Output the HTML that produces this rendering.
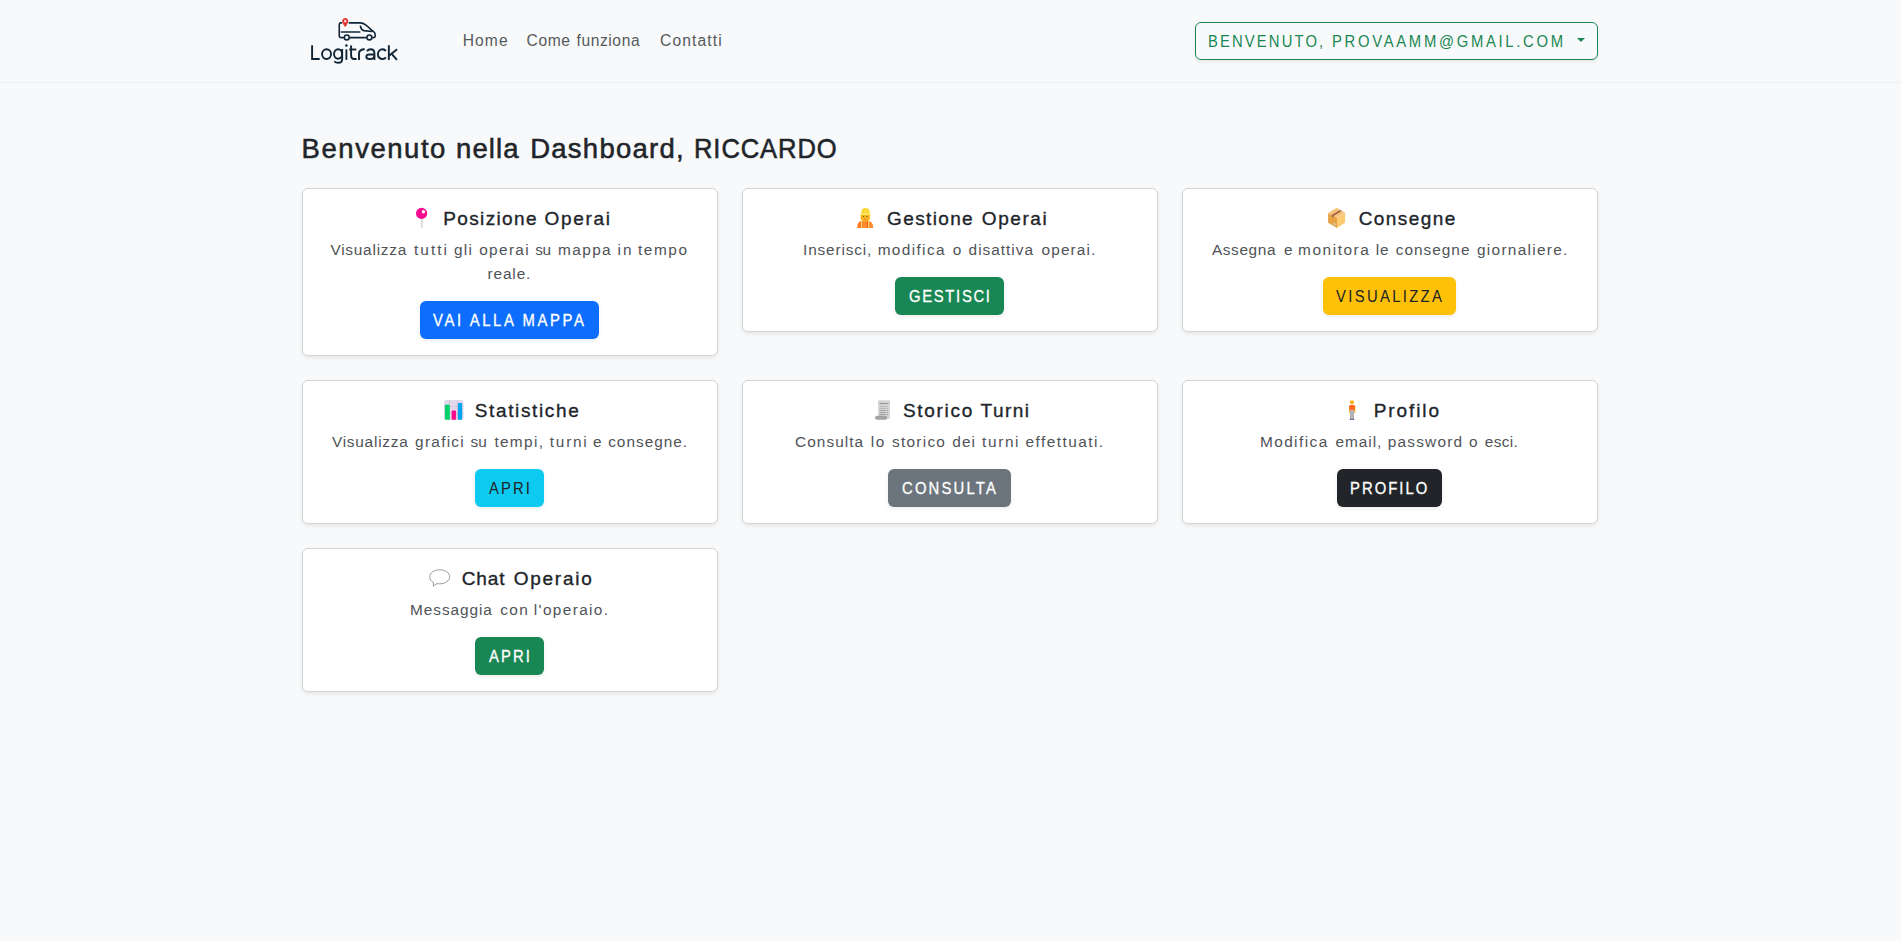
<!DOCTYPE html>
<html lang="it">
<head>
<meta charset="utf-8">
<title>Logitrack - Dashboard</title>
<style>
*{box-sizing:border-box;}
html,body{margin:0;padding:0;}
body{background:#f8f9fa;font-family:"Liberation Sans",sans-serif;color:#212529;width:1901px;height:941px;overflow:hidden;position:relative;}
a{text-decoration:none;}
.navbar{position:absolute;left:0;top:0;width:1901px;height:83px;border-bottom:1px solid #eceef0;background:#f8f9fa;}
.logo{position:absolute;left:300px;top:10px;}
.w{position:absolute;display:block;white-space:nowrap;line-height:1;font-weight:400;}
.dd{position:absolute;left:1195px;top:22px;width:403px;height:38px;margin:0;padding:0;background:transparent;border:1px solid #198754;border-radius:6px;box-shadow:0 2px 4px rgba(0,0,0,.075);font-family:inherit;}
.caret{position:absolute;left:381px;top:15px;width:0;height:0;border-top:4.8px solid #198754;border-left:4.8px solid transparent;border-right:4.8px solid transparent;}
h1{margin:0;}
.card{position:absolute;width:416px;background:#fff;border:1px solid #d3d4d5;border-radius:6px;box-shadow:0 2px 4px rgba(0,0,0,.075);}
.card-title,.card-text{margin:0;}
.emo{position:absolute;display:block;overflow:visible;}
.btn{position:absolute;display:block;height:38px;border-radius:6px;box-shadow:0 2px 4px rgba(0,0,0,.075);}
</style>
</head>
<body>
<nav class="navbar">
  <a class="brand" href="#" aria-label="Logitrack"><svg class="logo" width="110" height="60" viewBox="300 10 110 60"><g fill="none" stroke="#112739" stroke-width="1.6" stroke-linecap="round" stroke-linejoin="round">
  <path d="M341.5 22.9 H340.8 Q339.26 22.9 339.26 24.4 V36.1 Q339.26 37.6 340.8 37.6 H343.3"/>
  <path d="M349.4 22.9 H360.1 Q363 22.9 366 25.2 Q369 27.6 371.8 30.4 L373.3 31.3 Q375.2 32.6 375.2 35 V36.1 Q375.2 37.6 373.7 37.6 H372.6"/>
  <path d="M349.9 37.6 H366"/>
  <path d="M341.3 32 H359.8"/>
  <path d="M360.4 26.3 Q361.3 30.2 364 30.6 L371.8 31.5"/>
  <circle cx="346.75" cy="37.4" r="2.45"/>
  <circle cx="369.4" cy="37.4" r="2.45"/>
</g>
<path d="M345.2 18.1 C347 18.1 348.3 19.5 348.3 21.2 C348.3 23.3 345.2 27.1 345.2 27.1 C345.2 27.1 342.1 23.3 342.1 21.2 C342.1 19.5 343.4 18.1 345.2 18.1Z" fill="#e23b36"/>
<circle cx="345.2" cy="21.2" r="1.1" fill="#fff"/>
<g fill="none" stroke="#0f2536" stroke-width="1.9" stroke-linecap="butt" stroke-linejoin="miter">
  <path d="M312.1 45.2 V59.05 H319.7"/>
  <ellipse cx="326.55" cy="54.12" rx="4.5" ry="4.9"/>
  <ellipse cx="338.1" cy="53.95" rx="4.05" ry="4.75"/>
  <path d="M342.15 48.9 V59.5 C342.15 62 340.5 62.75 338.2 62.75 C336.6 62.75 335.2 62.2 334.3 61.3"/>
  <path d="M346.4 49.4 V59.9"/>
  <path d="M351.1 45.4 V55.8 Q351.1 59 354.2 59 H356.6"/>
  <path d="M349.2 49.5 H356.3"/>
  <path d="M359 59.9 V53.8 Q359 49.25 364.75 49.25"/>
  <path d="M366.9 51.1 Q368.4 49.2 370.6 49.2 Q374.4 49.2 374.4 53.2 V59.9"/>
  <path d="M374.4 54.5 H369.6 Q366.3 54.5 366.3 56.8 Q366.3 59.05 369.6 59.05 Q374.4 59.05 374.4 55.8"/>
  <path d="M385.9 51.0 A4.55 4.9 0 1 0 385.9 57.3"/>
  <path d="M388.85 45.2 V59.9"/>
  <path d="M397.1 49.3 L389.3 55.6"/>
  <path d="M391.7 53.9 L396.9 59.9"/>
</g>
<circle cx="346.4" cy="45.6" r="1.25" fill="#0f2536"/>
</svg></a>
  <a class="nav-link" href="#"><span class="w" style="left:462.7px;top:33px;font-size:15.6px;letter-spacing:1.1px;color:#55595c;">Home</span></a>
  <a class="nav-link" href="#"><span class="w" style="left:526.6px;top:33px;font-size:15.6px;letter-spacing:0.6px;color:#55595c;">Come</span><span class="w" style="left:576.5px;top:33px;font-size:15.6px;letter-spacing:0.586px;color:#55595c;">funziona</span></a>
  <a class="nav-link" href="#"><span class="w" style="left:660.0px;top:33px;font-size:15.6px;letter-spacing:1.143px;color:#55595c;">Contatti</span></a>
  <button class="dd" type="button"><span class="w" style="left:12.0px;top:11px;font-size:15.6px;letter-spacing:2.234px;color:#198754;transform:scaleX(0.95);transform-origin:0 0;">BENVENUTO,</span><span class="w" style="left:136.1px;top:11px;font-size:15.6px;letter-spacing:2.842px;color:#198754;transform:scaleX(0.95);transform-origin:0 0;">PROVAAMM@GMAIL.COM</span><span class="caret"></span></button>
</nav>

<main>
<h1><span class="w" style="left:301.6px;top:135px;font-size:27.5px;letter-spacing:1.537px;color:#212529;-webkit-text-stroke:0.55px #212529;">Benvenuto</span><span class="w" style="left:456.0px;top:135px;font-size:27.5px;letter-spacing:1.125px;color:#212529;-webkit-text-stroke:0.55px #212529;">nella</span><span class="w" style="left:530.2px;top:135px;font-size:27.5px;letter-spacing:1.256px;color:#212529;-webkit-text-stroke:0.55px #212529;">Dashboard,</span><span class="w" style="left:694.0px;top:135px;font-size:27.5px;letter-spacing:0.968px;color:#212529;-webkit-text-stroke:0.55px #212529;transform:scaleX(0.93);transform-origin:0 0;">RICCARDO</span></h1>
<div class="card" style="left:302px;top:188px;height:168px">
  <h5 class="card-title"><svg class="emo" style="left:110px;top:16px" width="17" height="25" viewBox="413 205 17 25" aria-hidden="true"><rect x="421" y="218" width="1.6" height="9.7" rx="0.6" fill="#d4d4d4"/>
<circle cx="421.6" cy="213.4" r="5.6" fill="#f70a8d"/>
<circle cx="423.4" cy="211.8" r="1.7" fill="#fff"/></svg><span class="w" style="left:140.3px;top:20px;font-size:19px;letter-spacing:1.35px;color:#212529;-webkit-text-stroke:0.35px #212529;">Posizione</span><span class="w" style="left:241.6px;top:20px;font-size:19px;letter-spacing:1.68px;color:#212529;-webkit-text-stroke:0.35px #212529;">Operai</span></h5>
  <p class="card-text"><span class="w" style="left:27.4px;top:53px;font-size:15.4px;letter-spacing:0.767px;color:#4f5357;">Visualizza</span><span class="w" style="left:111.0px;top:53px;font-size:15.4px;letter-spacing:2.05px;color:#4f5357;">tutti</span><span class="w" style="left:150.9px;top:53px;font-size:15.4px;letter-spacing:1.3px;color:#4f5357;">gli</span><span class="w" style="left:176.2px;top:53px;font-size:15.4px;letter-spacing:1.34px;color:#4f5357;">operai</span><span class="w" style="left:232.2px;top:53px;font-size:15.4px;letter-spacing:-0.4px;color:#4f5357;">su</span><span class="w" style="left:255.0px;top:53px;font-size:15.4px;letter-spacing:1.4px;color:#4f5357;">mappa</span><span class="w" style="left:314.4px;top:53px;font-size:15.4px;letter-spacing:2.1px;color:#4f5357;">in</span><span class="w" style="left:334.9px;top:53px;font-size:15.4px;letter-spacing:1.6px;color:#4f5357;">tempo</span><span class="w" style="left:184.4px;top:77px;font-size:15.4px;letter-spacing:0.9px;color:#4f5357;">reale.</span></p>
  <a class="btn" href="#" style="left:117px;top:112px;width:179px;background:#0d6efd"><span class="w" style="left:12.6px;top:12px;font-size:15.6px;letter-spacing:2.785px;color:#fff;-webkit-text-stroke:0.3px #fff;transform:scaleX(0.95);transform-origin:0 0;">VAI ALLA MAPPA</span></a>
</div>
<div class="card" style="left:742px;top:188px;height:144px">
  <h5 class="card-title"><svg class="emo" style="left:112px;top:16px" width="20" height="25" viewBox="855 205 20 25" aria-hidden="true"><g>
  <path d="M857 227.9 Q857.2 223.2 859.6 221.8 Q860.6 221.2 861.8 221.1 L868.6 221.1 Q869.8 221.2 870.8 221.8 Q873.1 223.2 873.3 227.9 Z" fill="#ff8a30"/>
  <rect x="859.5" y="221.6" width="1.2" height="6.3" fill="#ff5a1f"/>
  <rect x="860.9" y="221.2" width="0.9" height="6.7" fill="#fff27a"/>
  <rect x="866.9" y="221.2" width="1.2" height="6.7" fill="#ff5a1f"/>
  <rect x="868.2" y="221.2" width="0.9" height="6.7" fill="#fff27a"/>
  <path d="M860.6 215 H869.9 V218.2 Q869.9 221.3 865.25 221.3 Q860.6 221.3 860.6 218.2 Z" fill="#fbb41d"/>
  <circle cx="863.4" cy="216.6" r="0.55" fill="#5a3a2a"/>
  <circle cx="866.9" cy="216.6" r="0.55" fill="#5a3a2a"/>
  <ellipse cx="865.1" cy="219.3" rx="0.8" ry="0.65" fill="#d9534f"/>
  <path d="M861 214.3 Q861 207.8 865.5 207.8 Q870 207.8 870 214.3 Z" fill="#fdd835"/>
  <rect x="864.8" y="208.2" width="1.4" height="6" fill="#ffe14d"/>
  <rect x="860.2" y="213.6" width="10.7" height="1.5" rx="0.7" fill="#ffeb66"/>
</g></svg><span class="w" style="left:144.1px;top:20px;font-size:19px;letter-spacing:1.357px;color:#212529;-webkit-text-stroke:0.35px #212529;">Gestione</span><span class="w" style="left:238.8px;top:20px;font-size:19px;letter-spacing:1.58px;color:#212529;-webkit-text-stroke:0.35px #212529;">Operai</span></h5>
  <p class="card-text"><span class="w" style="left:60.1px;top:53px;font-size:15.4px;letter-spacing:0.833px;color:#4f5357;">Inserisci,</span><span class="w" style="left:134.7px;top:53px;font-size:15.4px;letter-spacing:1.357px;color:#4f5357;">modifica</span><span class="w" style="left:209.7px;top:53px;font-size:15.4px;letter-spacing:0.0px;color:#4f5357;">o</span><span class="w" style="left:225.6px;top:53px;font-size:15.4px;letter-spacing:0.987px;color:#4f5357;">disattiva</span><span class="w" style="left:298.6px;top:53px;font-size:15.4px;letter-spacing:1.1px;color:#4f5357;">operai.</span></p>
  <a class="btn" href="#" style="left:152px;top:88px;width:109px;background:#198754"><span class="w" style="left:13.7px;top:12px;font-size:15.6px;letter-spacing:1.774px;color:#fff;-webkit-text-stroke:0.3px #fff;transform:scaleX(0.95);transform-origin:0 0;">GESTISCI</span></a>
</div>
<div class="card" style="left:1182px;top:188px;height:144px">
  <h5 class="card-title"><svg class="emo" style="left:143px;top:16px" width="21" height="25" viewBox="1326 205 21 25" aria-hidden="true"><g>
  <path d="M1328.1 213.1 L1337 217.6 L1337 227.9 L1328.1 222.8 Z" fill="#e6a243"/>
  <path d="M1337 217.6 L1345.1 212.8 L1345.1 222.8 L1337 227.9 Z" fill="#fdca74"/>
  <path d="M1328.1 213.1 L1336.7 207.8 L1345.1 212.8 L1337 217.6 Z" fill="#f8c27a"/>
  <path d="M1331.6 215 L1340 210.1 L1341.9 211.1 L1333.5 216.1 L1333.5 217.8 L1331.6 216.8 Z" fill="#a3654a"/>
  <path d="M1333.5 222.6 L1335.5 223.7 L1335.5 225.4 L1333.5 224.3 Z" fill="#c9d6e0"/>
</g></svg><span class="w" style="left:175.7px;top:20px;font-size:19px;letter-spacing:1.443px;color:#212529;-webkit-text-stroke:0.35px #212529;">Consegne</span></h5>
  <p class="card-text"><span class="w" style="left:28.9px;top:53px;font-size:15.4px;letter-spacing:0.617px;color:#4f5357;">Assegna</span><span class="w" style="left:100.9px;top:53px;font-size:15.4px;letter-spacing:0.0px;color:#4f5357;">e</span><span class="w" style="left:115.0px;top:53px;font-size:15.4px;letter-spacing:1.571px;color:#4f5357;">monitora</span><span class="w" style="left:192.8px;top:53px;font-size:15.4px;letter-spacing:0.7px;color:#4f5357;">le</span><span class="w" style="left:212.8px;top:53px;font-size:15.4px;letter-spacing:0.986px;color:#4f5357;">consegne</span><span class="w" style="left:294.0px;top:53px;font-size:15.4px;letter-spacing:1.282px;color:#4f5357;">giornaliere.</span></p>
  <a class="btn" href="#" style="left:140px;top:88px;width:133px;background:#ffc107"><span class="w" style="left:12.7px;top:12px;font-size:15.6px;letter-spacing:2.468px;color:#212529;-webkit-text-stroke:0.05px #212529;transform:scaleX(0.95);transform-origin:0 0;">VISUALIZZA</span></a>
</div>
<div class="card" style="left:302px;top:380px;height:144px">
  <h5 class="card-title"><svg class="emo" style="left:139px;top:16px" width="24" height="25" viewBox="442 397 24 25" aria-hidden="true"><g>
  <rect x="444" y="399.9" width="19.5" height="20" rx="2.2" fill="#e1d9eb"/>
  <rect x="449.2" y="399.9" width="0.6" height="20" fill="#c8bdd3"/>
  <rect x="457.3" y="399.9" width="0.6" height="20" fill="#c8bdd3"/>
  <rect x="444" y="406" width="19.5" height="0.6" fill="#c8bdd3"/>
  <rect x="444" y="413.2" width="19.5" height="0.6" fill="#c8bdd3"/>
  <rect x="444.9" y="404.8" width="4.9" height="14.9" rx="0.8" fill="#00d26a"/>
  <rect x="451.6" y="410.6" width="4.5" height="9.1" rx="0.8" fill="#f70a8d"/>
  <rect x="457.9" y="402.9" width="4.3" height="16.8" rx="0.8" fill="#00a6ed"/>
</g></svg><span class="w" style="left:171.8px;top:20px;font-size:19px;letter-spacing:1.63px;color:#212529;-webkit-text-stroke:0.35px #212529;">Statistiche</span></h5>
  <p class="card-text"><span class="w" style="left:28.9px;top:53px;font-size:15.4px;letter-spacing:0.767px;color:#4f5357;">Visualizza</span><span class="w" style="left:112.1px;top:53px;font-size:15.4px;letter-spacing:1.267px;color:#4f5357;">grafici</span><span class="w" style="left:167.5px;top:53px;font-size:15.4px;letter-spacing:0.1px;color:#4f5357;">su</span><span class="w" style="left:191.4px;top:53px;font-size:15.4px;letter-spacing:1.32px;color:#4f5357;">tempi,</span><span class="w" style="left:246.8px;top:53px;font-size:15.4px;letter-spacing:1.75px;color:#4f5357;">turni</span><span class="w" style="left:290.1px;top:53px;font-size:15.4px;letter-spacing:0.0px;color:#4f5357;">e</span><span class="w" style="left:305.2px;top:53px;font-size:15.4px;letter-spacing:0.987px;color:#4f5357;">consegne.</span></p>
  <a class="btn" href="#" style="left:172px;top:88px;width:69px;background:#0dcaf0"><span class="w" style="left:13.9px;top:12px;font-size:15.6px;letter-spacing:2.175px;color:#212529;-webkit-text-stroke:0.05px #212529;transform:scaleX(0.95);transform-origin:0 0;">APRI</span></a>
</div>
<div class="card" style="left:742px;top:380px;height:144px">
  <h5 class="card-title"><svg class="emo" style="left:130px;top:16px" width="20" height="25" viewBox="873 397 20 25" aria-hidden="true"><g>
  <path d="M878.1 400.6 L879 399.9 L879.9 400.6 L880.8 399.9 L881.7 400.6 L882.6 399.9 L883.5 400.6 L884.4 399.9 L885.3 400.6 L886.2 399.9 L887.1 400.6 L888 399.9 L889 400.6 L890 399.9 L890 418.8 L878.1 418.8 Z" fill="#d6d6d6"/>
  <rect x="879.5" y="402.9" width="9.1" height="1.2" fill="#9b9b9b"/>
  <rect x="879.5" y="406.1" width="6" height="0.7" fill="#a8a8a8"/>
  <rect x="886.6" y="406.1" width="1.5" height="0.7" fill="#a8a8a8"/>
  <rect x="879.5" y="408" width="6" height="0.7" fill="#a8a8a8"/>
  <rect x="886.6" y="408" width="1.5" height="0.7" fill="#a8a8a8"/>
  <rect x="879.5" y="410.1" width="6" height="0.9" fill="#9b9b9b"/>
  <rect x="886.6" y="410.1" width="1.5" height="0.9" fill="#9b9b9b"/>
  <rect x="879.5" y="412.1" width="6" height="0.9" fill="#9b9b9b"/>
  <rect x="886.6" y="412.1" width="1.5" height="0.9" fill="#9b9b9b"/>
  <rect x="879.5" y="414.1" width="6" height="0.9" fill="#9b9b9b"/>
  <rect x="886.6" y="414.1" width="1.5" height="0.9" fill="#9b9b9b"/>
  <rect x="875" y="415.8" width="12.2" height="3.9" rx="1.9" fill="#a3a3a3"/>
</g></svg><span class="w" style="left:160.0px;top:20px;font-size:19px;letter-spacing:1.683px;color:#212529;-webkit-text-stroke:0.35px #212529;">Storico</span><span class="w" style="left:237.6px;top:20px;font-size:19px;letter-spacing:1.475px;color:#212529;-webkit-text-stroke:0.35px #212529;">Turni</span></h5>
  <p class="card-text"><span class="w" style="left:52.1px;top:53px;font-size:15.4px;letter-spacing:1.043px;color:#4f5357;">Consulta</span><span class="w" style="left:127.8px;top:53px;font-size:15.4px;letter-spacing:1.6px;color:#4f5357;">lo</span><span class="w" style="left:149.0px;top:53px;font-size:15.4px;letter-spacing:1.267px;color:#4f5357;">storico</span><span class="w" style="left:209.2px;top:53px;font-size:15.4px;letter-spacing:1.15px;color:#4f5357;">dei</span><span class="w" style="left:239.0px;top:53px;font-size:15.4px;letter-spacing:1.65px;color:#4f5357;">turni</span><span class="w" style="left:282.6px;top:53px;font-size:15.4px;letter-spacing:1.44px;color:#4f5357;">effettuati.</span></p>
  <a class="btn" href="#" style="left:145px;top:88px;width:123px;background:#6c757d"><span class="w" style="left:13.6px;top:12px;font-size:15.6px;letter-spacing:2.301px;color:#fff;-webkit-text-stroke:0.3px #fff;transform:scaleX(0.95);transform-origin:0 0;">CONSULTA</span></a>
</div>
<div class="card" style="left:1182px;top:380px;height:144px">
  <h5 class="card-title"><svg class="emo" style="left:164px;top:16px" width="10" height="25" viewBox="1347 397 10 25" aria-hidden="true"><g>
  <rect x="1349" y="405.2" width="1.3" height="7.7" rx="0.6" fill="#ffb02e"/>
  <rect x="1354" y="405.2" width="1.3" height="7.7" rx="0.6" fill="#ffb02e"/>
  <rect x="1350" y="410" width="4" height="9.2" fill="#b4b4b4"/>
  <rect x="1349.8" y="418.6" width="1.9" height="1.3" rx="0.5" fill="#6b4f8a"/>
  <rect x="1352.3" y="418.6" width="1.9" height="1.3" rx="0.5" fill="#6b4f8a"/>
  <path d="M1349.4 406.2 Q1349.4 405 1350.6 405 H1353.6 Q1354.8 405 1354.8 406.2 V410.1 H1349.4 Z" fill="#ff6723"/>
  <circle cx="1352" cy="402.3" r="2.1" fill="#fcb316"/>
</g></svg><span class="w" style="left:190.8px;top:20px;font-size:19px;letter-spacing:1.9px;color:#212529;-webkit-text-stroke:0.35px #212529;">Profilo</span></h5>
  <p class="card-text"><span class="w" style="left:76.9px;top:53px;font-size:15.4px;letter-spacing:1.429px;color:#4f5357;">Modifica</span><span class="w" style="left:152.6px;top:53px;font-size:15.4px;letter-spacing:0.92px;color:#4f5357;">email,</span><span class="w" style="left:204.7px;top:53px;font-size:15.4px;letter-spacing:1.214px;color:#4f5357;">password</span><span class="w" style="left:285.9px;top:53px;font-size:15.4px;letter-spacing:0.0px;color:#4f5357;">o</span><span class="w" style="left:301.8px;top:53px;font-size:15.4px;letter-spacing:0.35px;color:#4f5357;">esci.</span></p>
  <a class="btn" href="#" style="left:154px;top:88px;width:105px;background:#212529"><span class="w" style="left:12.6px;top:12px;font-size:15.6px;letter-spacing:2.158px;color:#fff;-webkit-text-stroke:0.3px #fff;transform:scaleX(0.95);transform-origin:0 0;">PROFILO</span></a>
</div>
<div class="card" style="left:302px;top:548px;height:144px">
  <h5 class="card-title"><svg class="emo" style="left:124px;top:17px" width="25" height="23" viewBox="427 566 25 23" aria-hidden="true"><path d="M439.7 569.8 C445.3 569.8 449.7 572.9 449.7 576.8 C449.7 580.9 445.3 583.8 439.7 583.8 L436.3 583.8 L433.4 586.3 L433.4 582.5 C431 581.3 429.7 579.2 429.7 576.8 C429.7 572.9 434.1 569.8 439.7 569.8 Z" fill="#fff" stroke="#8e8e8e" stroke-width="0.9" stroke-linejoin="round"/></svg><span class="w" style="left:158.7px;top:20px;font-size:19px;letter-spacing:0.933px;color:#212529;-webkit-text-stroke:0.35px #212529;">Chat</span><span class="w" style="left:210.8px;top:20px;font-size:19px;letter-spacing:1.717px;color:#212529;-webkit-text-stroke:0.35px #212529;">Operaio</span></h5>
  <p class="card-text"><span class="w" style="left:107.1px;top:53px;font-size:15.4px;letter-spacing:0.912px;color:#4f5357;">Messaggia</span><span class="w" style="left:197.2px;top:53px;font-size:15.4px;letter-spacing:1.4px;color:#4f5357;">con</span><span class="w" style="left:230.8px;top:53px;font-size:15.4px;letter-spacing:1.367px;color:#4f5357;">l'operaio.</span></p>
  <a class="btn" href="#" style="left:172px;top:88px;width:69px;background:#198754"><span class="w" style="left:13.9px;top:12px;font-size:15.6px;letter-spacing:2.175px;color:#fff;-webkit-text-stroke:0.3px #fff;transform:scaleX(0.95);transform-origin:0 0;">APRI</span></a>
</div>

</main>
</body>
</html>
